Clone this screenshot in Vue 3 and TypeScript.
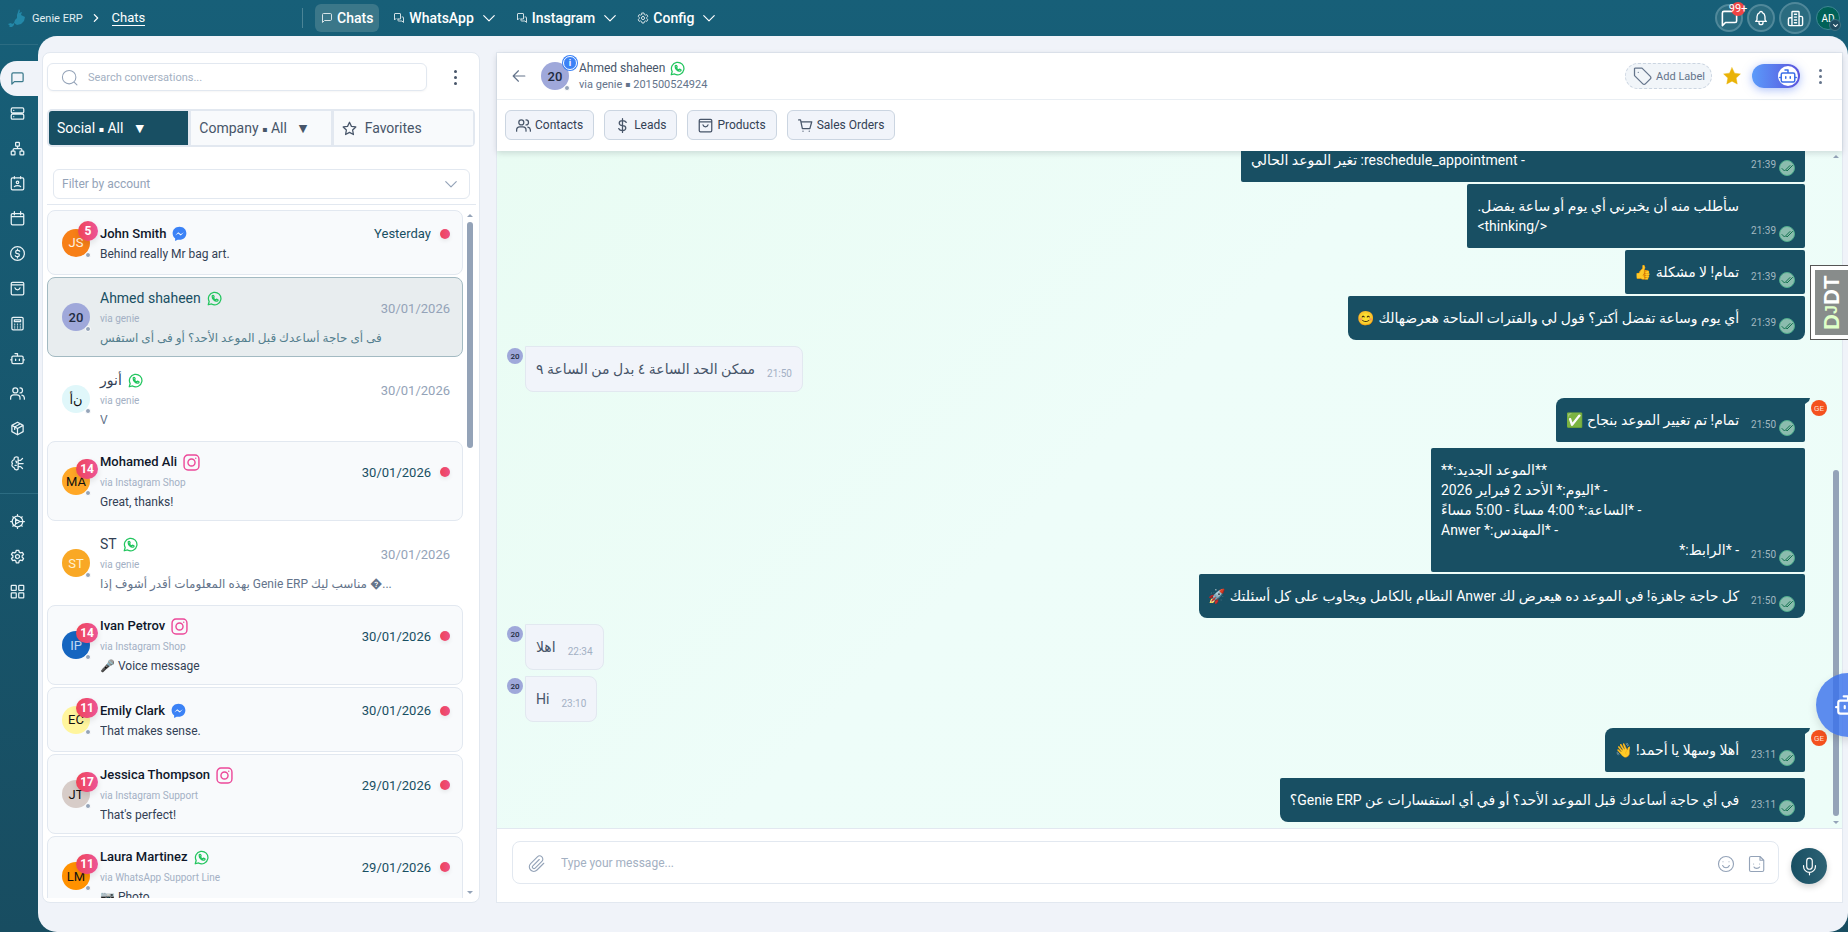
<script setup lang="ts">
import { h, ref } from 'vue'

const shapes: Record<string, string> = {
  chat: 'M21 15a2 2 0 0 1-2 2H7l-4 4V5a2 2 0 0 1 2-2h14a2 2 0 0 1 2 2z',
  bubbles: 'M15 11V4a1 1 0 0 0-1-1H4a1 1 0 0 0-1 1v12l3-3M10 14v3a1 1 0 0 0 1 1h7l3 3V11a1 1 0 0 0-1-1h-2M10 14h5v-4',
  server: 'M4 3h16a2 2 0 0 1 2 2v4a2 2 0 0 1-2 2H4a2 2 0 0 1-2-2V5a2 2 0 0 1 2-2zM4 13h16a2 2 0 0 1 2 2v4a2 2 0 0 1-2 2H4a2 2 0 0 1-2-2v-4a2 2 0 0 1 2-2zM6 7h.01M6 17h.01',
  sitemap: 'M10 2h4a1 1 0 0 1 1 1v4a1 1 0 0 1-1 1h-4a1 1 0 0 1-1-1V3a1 1 0 0 1 1-1zM3 16h4a1 1 0 0 1 1 1v4a1 1 0 0 1-1 1H3a1 1 0 0 1-1-1v-4a1 1 0 0 1 1-1zM17 16h4a1 1 0 0 1 1 1v4a1 1 0 0 1-1 1h-4a1 1 0 0 1-1-1v-4a1 1 0 0 1 1-1zM12 8v4M5 16v-2a2 2 0 0 1 2-2h10a2 2 0 0 1 2 2v2',
  badge: 'M4 3h16a2 2 0 0 1 2 2v15a2 2 0 0 1-2 2H4a2 2 0 0 1-2-2V5a2 2 0 0 1 2-2zM7 1v3M17 1v3M12 8a2 2 0 1 0 0 4a2 2 0 1 0 0-4zM7 17c2-2 8-2 10 0',
  calendar: 'M4 4h16a2 2 0 0 1 2 2v14a2 2 0 0 1-2 2H4a2 2 0 0 1-2-2V6a2 2 0 0 1 2-2zM7 1v5M17 1v5M2 9h20',
  coin: 'M12 1a11 11 0 1 0 0 22a11 11 0 1 0 0-22zM15.5 8.5c-.5-1-1.500-1.500-3.500-1.500c-4 0-4 5 0 5s4 5 0 5c-2 0-3-.5-3.500-1.500M12 5v2M12 17v2',
  bag: 'M4 2h16a2 2 0 0 1 2 2v16a2 2 0 0 1-2 2H4a2 2 0 0 1-2-2V4a2 2 0 0 1 2-2zM2 6h20M8 11c1 4 7 4 8 0',
  calculator: 'M5 2h14a2 2 0 0 1 2 2v16a2 2 0 0 1-2 2H5a2 2 0 0 1-2-2V4a2 2 0 0 1 2-2zM7 6h10v3H7zM7.500 13h.01M12 13h.01M16.500 13h.01M7.500 16h.01M12 16h.01M16.500 16h.01M7.500 19h.01M12 19h.01M16.500 19h.01',
  bot: 'M5 8h14a2 2 0 0 1 2 2v8a2 2 0 0 1-2 2H5a2 2 0 0 1-2-2v-8a2 2 0 0 1 2-2zM12 8V4H8M1 14h2M21 14h2M9 13v2M15 13v2',
  users: 'M8.500 3a4 4 0 1 0 0 8a4 4 0 1 0 0-8zM1 21v-2a5 5 0 0 1 5-5h5a5 5 0 0 1 5 5v2M16 3a4 4 0 0 1 0 8M19 14.500a5 5 0 0 1 4 4.500v2',
  box: 'M12 2l9 5v10l-9 5l-9-5V7zM12 12l9-5M12 12v10M12 12L3 7M16.500 4.500l-9 5v4',
  brain: 'M13 2c-4-2-7 1-6.500 4C3 7 2 10 4 12c-2 3-.5 6 2.500 6.500C7 22 11 23 13 21M13 2v19M13 7h4l3-3M13 12h8M13 17h4l3 3M9 8c2 0 2 2 1 3M8 15h2',
  helm: 'M12 3.500a8.500 8.500 0 1 0 0 17a8.500 8.500 0 1 0 0-17zM12 1v2M12 21v2M1 12h2M21 12h2M4.500 4.500l1 1M18.500 18.500l1 1M4.500 19.500l1-1M18.500 5.500l1-1M9 8l7 4l-7 4zM16 12h4M9 8L7.500 5.500M9 16l-1.500 2.500',
  gear: 'M10 2h4l.7 3l2 1.200l3-.9l2 3.400l-2.300 2.100v2.400l2.300 2.100l-2 3.400l-3-.9l-2 1.200l-.7 3h-4l-.7-3l-2-1.200l-3 .9l-2-3.400l2.300-2.100v-2.400L2.300 8.700l2-3.400l3 .9l2-1.200zM12 8.800a3.200 3.200 0 1 0 0 6.400a3.200 3.200 0 1 0 0-6.400z',
  grid: 'M3 2h6a1 1 0 0 1 1 1v6a1 1 0 0 1-1 1H3a1 1 0 0 1-1-1V3a1 1 0 0 1 1-1zM15 2h6a1 1 0 0 1 1 1v6a1 1 0 0 1-1 1h-6a1 1 0 0 1-1-1V3a1 1 0 0 1 1-1zM3 14h6a1 1 0 0 1 1 1v6a1 1 0 0 1-1 1H3a1 1 0 0 1-1-1v-6a1 1 0 0 1 1-1zM15 14h6a1 1 0 0 1 1 1v6a1 1 0 0 1-1 1h-6a1 1 0 0 1-1-1v-6a1 1 0 0 1 1-1z',
  down: 'M3 8l9 9l9-9',
  right: 'M8 4l8 8l-8 8',
  search: 'M11.500 2a9.500 9.500 0 1 0 0 19a9.500 9.500 0 1 0 0-19zM18.500 18.500l4 4',
  star: 'M12 2l3.100 6.600l7 .9l-5.100 5l1.300 7.200L12 18.200l-6.300 3.500L7 14.500l-5.100-5l7-.9z',
  bell: 'M10 4a2 2 0 0 1 4 0a7 7 0 0 1 4 6v4a4 4 0 0 0 2 3H4a4 4 0 0 0 2-3v-4a7 7 0 0 1 4-6M9 18v1a3 3 0 0 0 6 0v-1',
  building: 'M7 22V3a1 1 0 0 1 1-1h8a1 1 0 0 1 1 1v19zM7 11H4a2 2 0 0 0-2 2v7a2 2 0 0 0 2 2h16a2 2 0 0 0 2-2V11a2 2 0 0 0-2-2h-3M10.500 6h3M10.500 10h3M10.500 14h3M10.500 18h3',
  back: 'M2 12h20M2 12l9 9M2 12l9-9',
  tag: 'M3 3v8.500l10 10a2 2 0 0 0 3 0l6-6a2 2 0 0 0 0-3l-10-10H4a1 1 0 0 0-1 .5zM7.500 7.500h.01',
  dollar: 'M18 7c-1-2-3-3-6-3c-7 0-7 8 0 8s7 8 0 8c-3 0-5-1-6-3M12 1v22',
  cart: 'M1 3h3l3 14h12l3-11H5M8 21h.01M18 21h.01',
  clip: 'M21 11l-9 9a6 6 0 0 1-8.500-8.500l9-9a4 4 0 0 1 6 6l-9 9a2 2 0 0 1-3-3l8.500-8.500',
  smile: 'M12 2a10 10 0 1 0 0 20a10 10 0 1 0 0-20zM8 9h.01M16 9h.01M7.500 14c2 4 7 4 9 0',
  sticker: 'M4 2h12l5 5v13a2 2 0 0 1-2 2H4a2 2 0 0 1-2-2V4a2 2 0 0 1 2-2zM16 2v5h5M7.500 12h.01M15.500 12h.01M8 16c1 2.500 6 2.500 7.500 0',
  mic: 'M12 1.500a3.500 3.500 0 0 0-3.500 3.500v7a3.500 3.500 0 0 0 7 0V5a3.500 3.500 0 0 0-3.500-3.500zM4.500 11v1a7.500 7.500 0 0 0 15 0v-1M12 19.500v3',
  checks: 'M2 13l5 5L18 7M11 17l1 1L23 7',
  whatsapp: 'M2 22l1.500-5.200A10 10 0 1 1 7.300 20.700zM8.500 7.500c-1 5 4 10 8.500 8.500c.8-.5.8-1.500.4-2l-2.200-1l-1.200 1.200c-2-.8-3-2-3.600-3.600L11.500 9.500L10.500 7.200c-.6-.4-1.600-.2-2 .3z',
  instagram: 'M7 1.500h10A5.500 5.500 0 0 1 22.500 7v10a5.500 5.500 0 0 1-5.500 5.500H7A5.500 5.500 0 0 1 1.500 17V7A5.500 5.500 0 0 1 7 1.500zM12 7a5 5 0 1 0 0 10a5 5 0 1 0 0-10zM18 6h.01',
}

const Icon = (props: { name: string }) =>
  h('svg', { viewBox: '0 0 24 24', 'aria-hidden': 'true', class: 'icon' }, [h('path', { d: shapes[props.name] })])

type Network = 'whatsapp' | 'instagram' | 'messenger'
interface Conversation {
  name: string
  network: Network
  initials: string
  tone: string
  date: string
  text: string
  via?: string
  unread?: number
  active?: boolean
}

const sections = ['chat', 'server', 'sitemap', 'badge', 'calendar', 'coin', 'bag', 'calculator', 'bot', 'users', 'box', 'brain']
const tools = ['helm', 'gear', 'grid']
const menus = [
  { label: 'WhatsApp', icon: 'bubbles' },
  { label: 'Instagram', icon: 'bubbles' },
  { label: 'Config', icon: 'gear' },
]
const links = [
  { label: 'Contacts', icon: 'users' },
  { label: 'Leads', icon: 'dollar' },
  { label: 'Products', icon: 'bag' },
  { label: 'Sales Orders', icon: 'cart' },
]
const conversations: Conversation[] = [
  { name: 'John Smith', network: 'messenger', initials: 'JS', tone: 'orange', date: 'Yesterday', text: 'Behind really Mr bag art.', unread: 5 },
  { name: 'Ahmed shaheen', network: 'whatsapp', initials: '20', tone: 'violet', date: '30/01/2026', via: 'via genie', text: 'فى أى حاجة أساعدك قبل الموعد الأحد؟ أو فى أى استفس', active: true },
  { name: 'أنور', network: 'whatsapp', initials: 'ن\u200Cأ', tone: 'cyan', date: '30/01/2026', via: 'via genie', text: 'V' },
  { name: 'Mohamed Ali', network: 'instagram', initials: 'MA', tone: 'amber', date: '30/01/2026', via: 'via Instagram Shop', text: 'Great, thanks!', unread: 14 },
  { name: 'ST', network: 'whatsapp', initials: 'ST', tone: 'gold', date: '30/01/2026', via: 'via genie', text: 'بهذه المعلومات أقدر أشوف إذا Genie ERP مناسب ليك \uFFFD...' },
  { name: 'Ivan Petrov', network: 'instagram', initials: 'IP', tone: 'blue', date: '30/01/2026', via: 'via Instagram Shop', text: '🎤 Voice message', unread: 14 },
  { name: 'Emily Clark', network: 'messenger', initials: 'EC', tone: 'yellow', date: '30/01/2026', text: 'That makes sense.', unread: 11 },
  { name: 'Jessica Thompson', network: 'instagram', initials: 'JT', tone: 'stone', date: '29/01/2026', via: 'via Instagram Support', text: "That's perfect!", unread: 17 },
  { name: 'Laura Martinez', network: 'whatsapp', initials: 'LM', tone: 'deep', date: '29/01/2026', via: 'via WhatsApp Support Line', text: '📷 Photo', unread: 11 },
]

interface Message {
  lines: string[]
  time: string
  received?: boolean
  first?: boolean
  last?: boolean
  spaced?: boolean
  size?: 'wide' | 'medium'
}
const messages: Message[] = [
  { lines: ['- reschedule_appointment: تغير الموعد الحالي'], time: '21:39', size: 'wide' },
  { lines: ['سأطلب منه أن يخبرني أي يوم أو ساعة يفضل.', '</thinking>'], time: '21:39' },
  { lines: ['تمام! لا مشكلة 👍'], time: '21:39' },
  { lines: ['أي يوم وساعة تفضل أكتر؟ قول لي والفترات المتاحة هعرضهالك 😊'], time: '21:39', last: true },
  { lines: ['ممكن الحد الساعة ٤ بدل من الساعة ٩'], time: '21:50', received: true, spaced: true },
  { lines: ['تمام! تم تغيير الموعد بنجاح ✅'], time: '21:50', first: true, spaced: true },
  { lines: ['**الموعد الجديد:**', '- *اليوم:* الأحد 2 فبراير 2026', '- *الساعة:* 4:00 مساءً - 5:00 مساءً', '- *المهندس:* Anwer', '- *الرابط:*'], time: '21:50', spaced: true, size: 'medium' },
  { lines: ['كل حاجة جاهزة! في الموعد ده هيعرض لك Anwer النظام بالكامل ويجاوب على كل أسئلتك 🚀'], time: '21:50', last: true },
  { lines: ['اهلا'], time: '22:34', received: true, spaced: true },
  { lines: ['Hi'], time: '23:10', received: true, spaced: true },
  { lines: ['أهلا وسهلا يا أحمد! 👋'], time: '23:11', first: true, spaced: true },
  { lines: ['في أي حاجة أساعدك قبل الموعد الأحد؟ أو في أي استفسارات عن Genie ERP؟'], time: '23:11', last: true, spaced: true },
]

const query = ref('')
const account = ref('')
const draft = ref('')
const autopilot = ref(true)
</script>

<template>
  <div class="app">
    <header class="topbar">
      <svg class="logo" viewBox="0 0 18 18" aria-hidden="true">
        <path d="M11 0l1 2l-1 2l3-1l-1 3l4 2l-1 4l-3 3l-4 1l-3-2l1-3l2-2V6l1-3zM0 15l3-1l1 1l2-1v2l-2 2H1l1-1z" />
      </svg>
      <nav class="crumbs" aria-label="Breadcrumb">
        <a href="#" class="home">Genie ERP</a>
        <Icon name="right" class="crumb-arrow" />
        <a href="#" class="here">Chats</a>
      </nav>
      <nav class="menus" aria-label="Modules">
        <a href="#" class="menu current"><Icon name="chat" />Chats</a>
        <button v-for="m in menus" :key="m.label" type="button" class="menu">
          <Icon :name="m.icon" />{{ m.label }}<Icon name="down" class="caret" />
        </button>
      </nav>
      <div class="account">
        <button type="button" class="round" aria-label="Messages"><Icon name="chat" /><span class="alert">99+</span></button>
        <button type="button" class="round bell" aria-label="Notifications"><Icon name="bell" /></button>
        <button type="button" class="round large" aria-label="Company"><Icon name="building" /></button>
        <button type="button" class="user">AD<span class="user-caret"><Icon name="down" /></span></button>
      </div>
    </header>

    <aside class="rail">
      <nav class="rail-group" aria-label="Sections">
        <a v-for="(s, i) in sections" :key="s" href="#" :class="['rail-link', { on: i === 0 }]" :aria-label="s"><Icon :name="s" /></a>
      </nav>
      <nav class="rail-group tools" aria-label="Tools">
        <a v-for="s in tools" :key="s" href="#" class="rail-link" :aria-label="s"><Icon :name="s" /></a>
      </nav>
    </aside>

    <main class="stage">
      <section class="inbox" aria-label="Conversations">
        <div class="search-row">
          <label class="search">
            <Icon name="search" />
            <input v-model="query" type="text" placeholder="Search conversations..." aria-label="Search conversations" />
          </label>
          <button type="button" class="kebab" aria-label="More options"><i></i><i></i><i></i></button>
        </div>
        <div class="tabs">
          <button type="button" class="tab chosen"><span>Social <span class="sq">▪</span> All</span><span class="tri">▼</span></button>
          <button type="button" class="tab"><span>Company <span class="sq">▪</span> All</span><span class="tri">▼</span></button>
          <button type="button" class="tab"><Icon name="star" /><span>Favorites</span></button>
        </div>
        <div class="filter">
          <select v-model="account" aria-label="Filter by account"><option value="">Filter by account</option></select>
          <Icon name="down" />
        </div>
        <div class="list-frame">
          <ul class="list">
            <li v-for="c in conversations" :key="c.name">
              <a href="#" :class="['item', { unread: c.unread, active: c.active }]">
                <span :class="['avatar', c.tone]">{{ c.initials }}<b v-if="c.unread" class="count">{{ c.unread }}</b><i class="presence"></i></span>
                <span class="info">
                  <span class="head">
                    <span class="who">
                      <span class="name">{{ c.name }}
                        <svg v-if="c.network === 'messenger'" class="messenger" viewBox="0 0 24 24" aria-hidden="true">
                          <path d="M12 1C5.500 1 1 5.500 1 11.500c0 3.500 1.500 6.300 4 8.200V24l4-2.200c1 .2 2 .3 3 .3c6.500 0 11-4.600 11-10.600S18.500 1 12 1z" />
                          <path class="bolt" d="M5 15l5-5l4 3l5-3l-5 5l-4-3z" />
                        </svg>
                        <Icon v-else :name="c.network" :class="c.network" />
                      </span>
                      <span v-if="c.via" class="via">{{ c.via }}</span>
                    </span>
                    <span class="date">{{ c.date }}</span>
                    <i v-if="c.unread" class="dot"></i>
                  </span>
                  <span class="snippet">{{ c.text }}</span>
                </span>
              </a>
            </li>
          </ul>
          <div class="scrollbar" aria-hidden="true"><i class="up"></i><span class="track"><i class="thumb"></i></span><i class="dn"></i></div>
        </div>
      </section>

      <section class="chat" aria-label="Chat with Ahmed shaheen">
        <div class="chat-top">
          <header class="chat-head">
            <button type="button" class="back" aria-label="Back"><Icon name="back" /></button>
            <span class="avatar violet">20<b class="info-mark">i</b><i class="presence"></i></span>
            <div class="contact">
              <h1>Ahmed shaheen <Icon name="whatsapp" class="whatsapp" /></h1>
              <p>via genie <span class="sq">▪</span> 201500524924</p>
            </div>
            <button type="button" class="add-label"><Icon name="tag" />Add Label</button>
            <button type="button" class="fav" aria-label="Favorite"><Icon name="star" /></button>
            <label class="toggle"><input v-model="autopilot" type="checkbox" aria-label="Bot replies" /><span class="knob"><Icon name="bot" /></span></label>
            <button type="button" class="kebab" aria-label="Chat options"><i></i><i></i><i></i></button>
          </header>
          <nav class="links" aria-label="Related records">
            <button v-for="l in links" :key="l.label" type="button"><Icon :name="l.icon" />{{ l.label }}</button>
          </nav>
        </div>

        <div class="thread-frame">
          <ol class="thread">
            <li v-for="(m, i) in messages" :key="i" :class="['row', { received: m.received, spaced: m.spaced }]">
              <span v-if="m.received" class="mini violet">20</span>
              <div :class="['bubble', m.size, { first: m.first, last: m.last }]">
                <div class="body"><p v-for="line in m.lines" :key="line" dir="rtl">{{ line }}</p></div>
                <time>{{ m.time }}</time>
                <span v-if="!m.received" class="seen"><Icon name="checks" /></span>
              </div>
              <span v-if="!m.received" class="side"><span v-if="m.first" class="mini sender">GE</span></span>
            </li>
          </ol>
          <div class="scrollbar" aria-hidden="true"><i class="up"></i><span class="track low"><i class="thumb"></i></span><i class="dn"></i></div>
        </div>

        <form class="composer" @submit.prevent>
          <div class="field">
            <button type="button" aria-label="Attach file"><Icon name="clip" /></button>
            <input v-model="draft" type="text" placeholder="Type your message..." aria-label="Message" />
            <button type="button" aria-label="Emoji"><Icon name="smile" /></button>
            <button type="button" aria-label="Stickers"><Icon name="sticker" /></button>
          </div>
          <button type="button" class="record" aria-label="Record voice"><Icon name="mic" /></button>
        </form>
      </section>
    </main>

    <button type="button" class="debug"><span><em>D<small>J</small></em>DT</span></button>
    <button type="button" class="assistant" aria-label="Assistant"><Icon name="bot" /></button>
  </div>
</template>

<style>
body { margin: 0; overflow: hidden; }
</style>

<style scoped>
.app, .app * { box-sizing: border-box; }
.app {
  height: 100vh; display: grid; grid-template: 36px minmax(0, 1fr) / 38px minmax(0, 1fr);
  background: linear-gradient(180deg, #175f78, #184d61); color: #475569; overflow: hidden;
  font-family: Roboto, "DejaVu Sans", "Noto Color Emoji", sans-serif; font-size: 14px;
}
button, input, select { font: inherit; color: inherit; }
button { padding: 0; border: 0; background: none; cursor: pointer; }
a { color: inherit; text-decoration: none; }
ul, ol, p, h1 { margin: 0; padding: 0; list-style: none; }
.icon { width: 14px; height: 14px; flex: none; fill: none; stroke: currentColor; stroke-width: 2; stroke-linecap: round; stroke-linejoin: round; }
.sq { font-size: 8px; vertical-align: 1px; }

.topbar { grid-column: 1 / 3; display: flex; align-items: center; color: #fff; padding: 0 8px; height: 36px; }
.logo { width: 18px; height: 18px; fill: #2388a8; margin-right: 6px; }
.crumbs { display: flex; align-items: center; width: 271px; }
.home { font-size: 11px; color: #e1eef2; }
.crumb-arrow { width: 10px; height: 10px; stroke-width: 3; margin: 0 11px 0 8px; }
.here { font-size: 13px; line-height: 15px; border-bottom: 1px solid #fff; }
.menus { display: flex; align-items: center; position: relative; gap: 8px; font-size: 14px; font-weight: 500; padding-left: 12px; flex: 1; }
.menus::before { content: ""; position: absolute; left: -1px; top: 4px; height: 20px; border-left: 1px solid #4b8496; }
.menu { display: flex; align-items: center; gap: 4px; height: 28px; padding: 0 6px; border-radius: 6px; }
.menu .icon { width: 12px; height: 12px; opacity: 0.8; }
.menu .caret { opacity: 1; width: 14px; height: 14px; margin-left: 4px; }
.current { background: #3b7789; }
.account { display: flex; align-items: center; gap: 4px; }
.round { position: relative; display: grid; place-items: center; width: 28px; height: 28px; border-radius: 50%; background: #2b6c80; border: 2px solid #50889a; }
.round .icon { width: 19px; height: 19px; stroke-width: 2; }
.bell .icon { width: 16px; height: 16px; }
.large { width: 32px; height: 32px; }
.large .icon { width: 17px; height: 17px; }
.alert { position: absolute; top: -4px; right: -4px; width: 14px; height: 14px; border-radius: 50%; background: #ef4444; font-size: 11px; line-height: 14px; display: flex; justify-content: center; }
.user { position: relative; width: 24px; height: 24px; border-radius: 50%; background: #006158; border: 1px solid #3f8795; font-size: 10px; margin-left: 1px; }
.user-caret { position: absolute; right: -2px; bottom: -2px; width: 12px; height: 12px; display: grid; place-items: center; border-radius: 50%; background: #204d62; border: 1px solid #3f7384; }
.user-caret .icon { width: 5px; height: 5px; stroke-width: 5; }

.rail { color: #e8f2f5; padding-top: 8px; }
.rail-group { display: grid; border-top: 1px solid #2c6c82; padding-top: 16px; }
.tools { margin-top: 12px; padding-top: 10px; }
.rail-link { height: 35px; display: flex; align-items: center; padding-left: 10px; }
.rail-link .icon { width: 15px; height: 15px; }
.on { background: #f0f3f9; border-radius: 17px 0 0 17px; color: #3b7a8c; }

.stage { display: flex; gap: 16px; background: #f0f3f9; border-radius: 19px; padding: 16px 5px 29px 4px; min-width: 0; }
.inbox { width: 438px; flex: none; display: flex; flex-direction: column; background: #fff; border: 1px solid #e2e8f0; border-radius: 8px; padding: 10px 3px 4px 4px; min-height: 0; }
.search-row { display: flex; align-items: center; justify-content: space-between; padding-right: 11px; }
.search { flex: none; width: 380px; height: 28px; display: flex; align-items: center; gap: 10px; border: 1px solid #e2e8f0; border-radius: 6px; padding-left: 13px; color: #94a3b8; box-shadow: 0 1px 2px #0000000a; }
.search .icon { width: 17px; height: 17px; stroke-width: 1.5; }
.search input { flex: 1; border: 0; background: none; outline: 0; font-size: 11px; padding: 0; }
input::placeholder { color: #a3b0c2; opacity: 1; }
.kebab { width: 20px; height: 24px; display: flex; flex-direction: column; align-items: center; justify-content: center; gap: 3px; }
.kebab i { width: 3px; height: 3px; border-radius: 50%; background: #475569; }
.tabs { display: grid; grid-template-columns: 1fr 1fr 1fr; gap: 3px; margin: 18px 1px 0 0; padding: 2px; background: #e2e8f0; border-radius: 5px; }
.tab { height: 34px; display: flex; align-items: center; padding: 0 8px; background: #f8fafc; font-size: 14px; color: #475569; }
.tab .icon { width: 15px; height: 15px; margin-right: 8px; }
.tri { font-size: 11px; margin-left: 12px; }
.chosen { background: #184f63; color: #fff; border-radius: 3px 0 0 3px; }
.filter { position: relative; margin: 22px 6px 0; padding-bottom: 6px; }
.filter::after { content: ""; position: absolute; left: -6px; right: -6px; bottom: 0; border-bottom: 1px solid #e2e8f0; }
.filter select { display: block; width: 100%; height: 30px; appearance: none; border: 1px solid #e2e8f0; border-radius: 6px; background: #fff; color: #94a3b8; padding: 0 8px; font-size: 12px; }
.filter .icon { position: absolute; right: 12px; top: 8px; width: 14px; height: 14px; color: #94a3b8; }
.list-frame { display: flex; flex: 1; min-height: 0; padding-top: 5px; }
.list { flex: 1; min-width: 0; overflow: hidden; display: flex; flex-direction: column; gap: 2px; }
.list li { flex: none; }
.item { display: flex; align-items: center; gap: 10px; min-height: 65px; padding: 9px 12px 9px 14px; border: 1px solid transparent; border-radius: 8px; }
.item.unread { background: #f8fafc; border-color: #e2e8f0; }
.item.active { background: #e8edef; border-color: #a3bac2; }
.avatar { position: relative; width: 28px; height: 28px; flex: none; border-radius: 50%; display: grid; place-items: center; font-size: 13px; color: #111; line-height: 1; }
.presence { position: absolute; right: -1px; bottom: -1px; width: 6px; height: 6px; border-radius: 50%; background: #94a3b8; border: 1px solid #fff; }
.orange { background: #f77f17; color: #fff3e0; }
.violet { background: #9fa8da; color: #222b40; font-weight: 500; }
.cyan { background: #e0f7fa; }
.amber { background: #ffa726; }
.gold { background: #f9a825; color: #fff0d0; }
.blue { background: #1565c0; color: #c5dcf5; }
.yellow { background: #fff59d; }
.stone { background: #d7ccc8; }
.deep { background: #ff9100; }
.count { position: absolute; right: -8px; top: -8px; min-width: 20px; height: 20px; padding: 0 4px; border-radius: 10px; background: linear-gradient(90deg, #ef4456, #ec5598); color: #fff; font-size: 12px; line-height: 20px; text-align: center; box-shadow: 0 3px 6px #0000001a; }
.info { flex: 1; min-width: 0; display: flex; flex-direction: column; }
.head { display: flex; align-items: center; }
.who { flex: 1; display: flex; flex-direction: column; min-width: 0; }
.name { display: flex; align-items: center; gap: 6px; line-height: 22px; font-size: 14px; color: #334155; }
.unread .name { color: #0f172a; font-weight: 500; font-size: 13px; }
.active .name { color: #184f63; }
.via { font-size: 10px; line-height: 20px; color: #a3b0c4; }
.date { font-size: 13px; color: #94a3b8; }
.unread .date { color: #184f63; }
.dot { width: 10px; height: 10px; border-radius: 50%; margin-left: 9px; background: linear-gradient(90deg, #ef4456, #ec4f88); box-shadow: 0 2px 4px #00000014; }
.snippet { font-size: 12px; line-height: 18px; color: #64748b; white-space: nowrap; overflow: hidden; }
.unread .snippet { color: #334155; }
.active .snippet { color: #547f8e; }
.whatsapp { width: 15px; height: 15px; color: #22c55e; }
.instagram { width: 17px; height: 17px; color: #ec4899; }
.messenger { width: 15px; height: 15px; fill: #3b82f6; }
.messenger .bolt { fill: #fff; }

.scrollbar { width: 13px; display: flex; flex-direction: column; align-items: center; flex: none; padding: 4px 0; }
.up { border: 3px solid transparent; border-top: 0; border-bottom: 3px solid #94a3b8; }
.dn { border: 3px solid transparent; border-bottom: 0; border-top: 3px solid #94a3b8; }
.track { flex: 1; display: flex; flex-direction: column; width: 6px; margin: 5px 0; }
.thumb { height: 34%; border-radius: 3px; background: #94a3b8; }
.low { justify-content: flex-end; }
.low .thumb { height: 53%; }

.chat { flex: 1; min-width: 0; display: flex; flex-direction: column; border: 1px solid #e2e8f0; background: #fff; }
.chat-top { flex: none; position: relative; box-shadow: 0 2px 6px #0f172a26; background: #fff; }
.chat-head { height: 47px; display: flex; align-items: center; padding: 0 12px 0 14px; border-bottom: 1px solid #e9eef3; }
.back { width: 16px; height: 16px; display: grid; place-items: center; color: #64748b; margin-right: 14px; }
.info-mark { position: absolute; right: -8px; top: -6px; width: 14px; height: 14px; border-radius: 50%; background: #3b82f6; border: 1px solid #fff; box-shadow: 0 0 0 1px #3b82f6; color: #fff; font-size: 9px; line-height: 12px; text-align: center; }
.contact { flex: 1; margin-left: 10px; }
.contact h1 { display: flex; align-items: center; gap: 5px; font-size: 12px; line-height: 18px; font-weight: 400; }
.contact p { font-size: 11px; line-height: 16px; color: #64748b; }
.add-label { display: flex; align-items: center; gap: 4px; height: 26px; padding: 0 6px; border: 1px dashed #cbd5e1; border-radius: 13px; background: #f1f5f9; color: #64748b; font-size: 11px; }
.add-label .icon { width: 20px; height: 20px; stroke-width: 1.5; }
.fav { margin: 0 10px; height: 20px; }
.fav .icon { width: 20px; height: 20px; fill: #eab308; color: #eab308; stroke-width: 0.5; }
.toggle { position: relative; width: 48px; height: 24px; border-radius: 12px; background: linear-gradient(90deg, #5b9bfa, #5a54dd); box-shadow: 0 2px 10px #5b83f580; display: flex; justify-content: flex-end; padding: 2px; margin-right: 10px; }
.toggle input { position: absolute; inset: 0; margin: 0; width: 100%; height: 100%; opacity: 0; }
.knob { width: 20px; height: 20px; border-radius: 50%; background: #fff; display: grid; place-items: center; color: #3b6fe8; }
.knob .icon { width: 18px; height: 18px; }
.chat-head .kebab i { background: #64748b; }
.links { display: flex; gap: 10px; padding: 10px 8px 11px; }
.links button { display: flex; align-items: center; gap: 4px; height: 30px; padding: 0 10px; border: 1px solid #cbd5e1; border-radius: 6px; background: #f1f4fa; color: #334155; font-size: 12px; }
.links .icon { width: 15px; height: 15px; color: #475569; }

.thread-frame { flex: 1; min-height: 0; display: flex; background: linear-gradient(135deg, #e9fcf3, #eefdf9 45%, #edfdf8); }
.thread { flex: 1; min-width: 0; display: flex; flex-direction: column; justify-content: flex-end; overflow: hidden; padding: 0 0 6px 10px; gap: 2px; }
.row { display: flex; justify-content: flex-end; flex: none; }
.row.spaced { margin-top: 4px; }
.row.received { justify-content: flex-start; gap: 2px; }
.bubble { position: relative; display: flex; align-items: flex-end; gap: 3px; min-height: 44px; padding: 12px 10px 6px; background: #184f63; color: #fff; border-radius: 2px; }
.wide { min-width: 564px; }
.medium { min-width: 374px; }
.first { border-radius: 8px 0 2px 2px; }
.first::after { content: ""; position: absolute; left: 100%; top: 0; width: 5px; height: 6px; background: #184f63; clip-path: polygon(0 0, 100% 0, 80% 50%, 0 100%); }
.last { border-radius: 2px 2px 8px 8px; }
.body { flex: 1; margin-bottom: 6px; margin-right: 9px; font-family: Roboto, "Noto Color Emoji", "DejaVu Sans", sans-serif; font-size: 14px; line-height: 20px; }
.body p { height: 20px; text-align: left; white-space: nowrap; }
.body p:last-child:nth-child(n + 3) { text-align: right; }
.bubble time { font-size: 10px; line-height: 14px; margin-bottom: 4px; color: #a3b9c1; }
.seen { width: 16px; height: 16px; border-radius: 50%; background: #8bbcae; border: 1px solid #4fae8d; display: grid; place-items: center; color: #13714f; }
.seen .icon { width: 12px; height: 12px; }
.received .bubble { min-height: 46px; background: #f1f4fa; border: 1px solid #e2e8f0; color: #475569; border-radius: 0 8px 8px 8px; }
.received time { color: #a3b0c4; }
.mini { width: 16px; height: 16px; margin-top: 2px; border-radius: 50%; display: grid; place-items: center; font-size: 8px; }
.side { width: 24px; padding-left: 6px; }
.sender { background: #f4511e; color: #ffe0d5; }

.composer { flex: none; display: flex; align-items: flex-end; gap: 12px; height: 74px; padding: 13px 15px 18px; border-top: 1px solid #e2e8f0; }
.field { flex: 1; height: 43px; display: flex; align-items: center; gap: 13px; border: 1px solid #e2e8f0; border-radius: 8px; padding: 2px 12px 0 15px; color: #94a3b8; }
.field .icon { width: 18px; height: 18px; stroke-width: 1.5; display: block; }
.field input { flex: 1; min-width: 0; border: 0; outline: 0; background: none; font-size: 12px; padding: 0 0 2px 2px; }
.record { width: 36px; height: 36px; border-radius: 50%; display: grid; place-items: center; color: #fff; background: linear-gradient(90deg, #184f63, #2d6274); box-shadow: 0 3px 6px #0000002b; }
.record .icon { width: 19px; height: 19px; stroke-width: 1.5; }

.debug { position: fixed; right: -1px; top: 265px; width: 39px; height: 75px; border: 1px solid #555; background: #fff; padding: 4px 0 4px 4px; display: flex; }
.debug span { flex: 1; display: flex; align-items: center; justify-content: center; height: 100%; width: 34px; background: #888c8b; color: #fff; font: bold 22px/34px "Liberation Sans", sans-serif; writing-mode: vertical-rl; transform: rotate(180deg); }
.debug em { font-style: normal; color: #dfffc8; }
.debug small { font-size: 16px; }
.assistant { position: fixed; right: -32px; top: 673px; width: 64px; height: 64px; border-radius: 50%; background: #3b72ebd0; color: #fff; display: grid; place-items: center; box-shadow: 0 4px 10px #0000001f; }
.assistant .icon { width: 26px; height: 26px; }
</style>
